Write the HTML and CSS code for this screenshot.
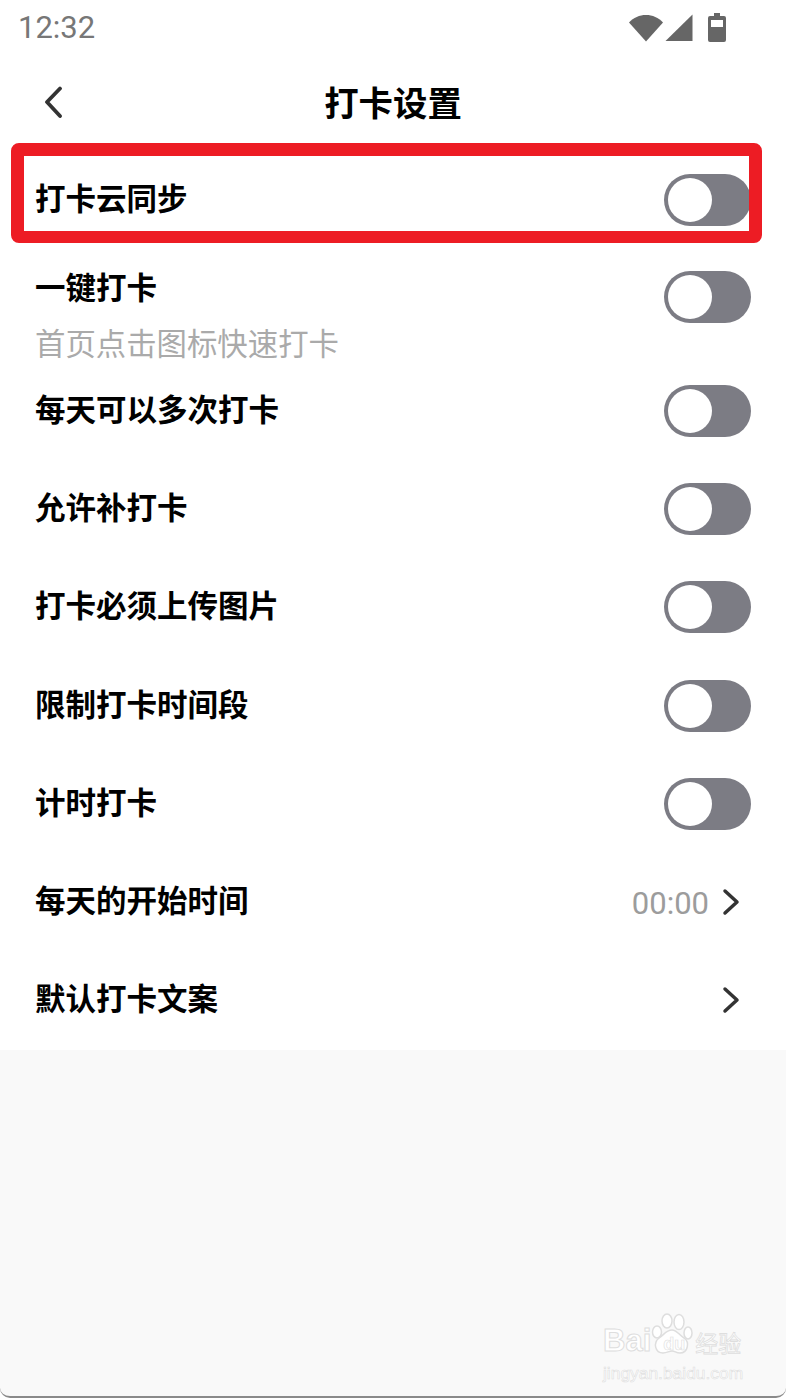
FILE: index.html
```html
<!DOCTYPE html>
<html lang="zh-CN">
<head>
    <meta charset="UTF-8">
    <meta name="viewport" content="width=device-width, initial-scale=1.0">
    <title>打卡设置</title>
    <link rel="stylesheet" href="styles.css">
</head>
<body>
    <div class="status-bar">
        <span class="status-time">12:32</span>
        <div class="status-icons">
            <svg class="icon-wifi" width="34" height="28" viewBox="0 0 34 28"><path d="M0 8.500C4.500 3.500 10.500 1 17 1s12.500 2.500 17 7.500L17 27.500z" fill="#666"/></svg>
            <svg class="icon-signal" width="28" height="28" viewBox="0 0 28 28"><path d="M27.500 .5V27H.5z" fill="#666"/></svg>
            <svg class="icon-battery" width="18" height="29" viewBox="0 0 18 29"><path d="M6 0h6v3h4a2 2 0 0 1 2 2v22a2 2 0 0 1-2 2H2a2 2 0 0 1-2-2V5a2 2 0 0 1 2-2h4z" fill="#666"/><rect x="3" y="7" width="12" height="7" fill="#fff"/></svg>
        </div>
    </div>

    <header class="title-bar">
        <svg class="back-icon" width="24" height="34" viewBox="0 0 24 34"><path d="M19 2.500 6 16l13 14" fill="none" stroke="#333" stroke-width="3.800" stroke-linecap="round" stroke-linejoin="round"/></svg>
        <h1>打卡设置</h1>
    </header>

    <main class="settings">
        <div class="row row-marked">
            <span class="label">打卡云同步</span>
            <span class="switch"></span>
            <div class="mark"></div>
        </div>
        <div class="row row-tall">
            <div>
                <div class="label">一键打卡</div>
                <div class="hint">首页点击图标快速打卡</div>
            </div>
            <span class="switch"></span>
        </div>
        <div class="row"><span class="label">每天可以多次打卡</span><span class="switch"></span></div>
        <div class="row"><span class="label">允许补打卡</span><span class="switch"></span></div>
        <div class="row"><span class="label">打卡必须上传图片</span><span class="switch"></span></div>
        <div class="row"><span class="label">限制打卡时间段</span><span class="switch"></span></div>
        <div class="row"><span class="label">计时打卡</span><span class="switch"></span></div>
        <div class="row">
            <span class="label">每天的开始时间</span>
            <div class="row-value">
                <span class="value">00:00</span>
                <svg class="chevron" width="18" height="28" viewBox="0 0 18 28"><path d="M3 3l12 11L3 25" fill="none" stroke="#333" stroke-width="3.500" stroke-linecap="round" stroke-linejoin="round"/></svg>
            </div>
        </div>
        <div class="row">
            <span class="label">默认打卡文案</span>
            <svg class="chevron" width="18" height="28" viewBox="0 0 18 28"><path d="M3 3l12 11L3 25" fill="none" stroke="#333" stroke-width="3.500" stroke-linecap="round" stroke-linejoin="round"/></svg>
        </div>
    </main>

    <div class="page-rest">
        <div class="watermark">
            <div class="wm-top">
                <span class="wm-brand">Bai</span>
                <div class="wm-paw">
                    <svg width="42" height="42" viewBox="0 0 42 42"><g fill="#fff" stroke="#dedede" stroke-width="1.500"><ellipse cx="6" cy="19" rx="4.500" ry="6"/><ellipse cx="16" cy="8" rx="5" ry="7"/><ellipse cx="28" cy="9" rx="5" ry="7.500"/><ellipse cx="37" cy="20" rx="4" ry="6"/><path d="M21 17c5 0 7 5 12 8 6 4 4 15-4 15-4 0-5-2-8-2s-5 2-9 2C4 40 2 30 8 25c5-3 7-8 13-8z"/></g></svg>
                    <span class="wm-du">du</span>
                </div>
                <span class="wm-cn">经验</span>
            </div>
            <div class="wm-url">jingyan.baidu.com</div>
        </div>
    </div>
</body>
</html>
```

FILE: styles.css
```css
* {
    box-sizing: border-box;
}

html, body {
    margin: 0;
    padding: 0;
}

body {
    display: flex;
    flex-direction: column;
    min-height: 1398px;
    background-color: #ffffff;
    font-family: "Noto Sans CJK SC", "Noto Sans", sans-serif;
    color: #000000;
}

/* Barre d'etat */
.status-bar {
    display: flex;
    justify-content: space-between;
    align-items: center;
    height: 55px;
    padding: 0 60px 0 18px;
}

.status-time {
    font-family: Roboto, sans-serif;
    font-size: 31px;
    color: #777777;
}

.status-icons {
    display: flex;
    align-items: center;
    gap: 2px;
}

.icon-battery {
    margin-left: 13px;
}

/* Titre */
.title-bar {
    position: relative;
    display: flex;
    justify-content: center;
    align-items: center;
    height: 96px;
    padding-bottom: 4px;
}

.title-bar h1 {
    margin: 0;
    font-size: 34.400px;
    font-weight: 700;
}

.back-icon {
    position: absolute;
    left: 41px;
    top: 31px;
}

/* Lignes de reglage */
.settings {
    padding-bottom: 1px;
    background-color: #ffffff;
}

.row {
    position: relative;
    display: flex;
    justify-content: space-between;
    align-items: center;
    height: 98.150px;
    padding: 0 36px 0 35px;
}

.row-tall {
    align-items: flex-start;
    height: 113px;
    padding-top: 22px;
}

.label {
    font-size: 30.500px;
    font-weight: 700;
    line-height: 36px;
    margin-top: -6px;
}

.row-tall .label {
    margin-top: -3px;
}

.hint {
    margin-top: 19px;
    font-size: 30.400px;
    line-height: 38px;
    color: #aaaaaa;
}

.switch {
    position: relative;
    flex: none;
    width: 87px;
    height: 52px;
    margin-right: -1px;
    border-radius: 26px;
    background-color: #7c7c84;
}

.switch::before {
    content: "";
    position: absolute;
    left: 4px;
    top: 4px;
    width: 44px;
    height: 44px;
    border-radius: 50%;
    background-color: #ffffff;
}

.row-value {
    display: flex;
    align-items: center;
    gap: 13px;
}

.value {
    margin-top: 4px;
    font-family: Roboto, sans-serif;
    font-size: 31px;
    color: #9c9c9c;
}

.chevron {
    flex: none;
    margin-right: 10px;
}

/* Cadre rouge par-dessus la premiere ligne */
.mark {
    position: absolute;
    left: 11px;
    top: -8px;
    width: 751px;
    height: 100px;
    border-style: solid;
    border-color: #ed1c24;
    border-width: 13px 13px 12px;
    border-radius: 8px;
}

/* Zone vide du bas */
.page-rest {
    position: relative;
    flex: 1;
    background-color: #f9f9f9;
    border-bottom: 2px solid #8a8a8a;
    border-radius: 0 0 10px 10px;
}

.watermark {
    position: absolute;
    left: 603px;
    top: 263px;
    width: 150px;
}

.wm-top {
    display: flex;
    align-items: flex-end;
    height: 44px;
}

.wm-brand {
    font-family: "Liberation Sans", sans-serif;
    font-size: 31px;
    font-weight: 700;
    line-height: 32px;
    color: #ffffff;
    -webkit-text-stroke: 1px #dedede;
}

.wm-paw {
    position: relative;
    flex: none;
    width: 42px;
    height: 42px;
    margin-bottom: 2px;
}

.wm-du {
    position: absolute;
    left: 12px;
    top: 22px;
    font-family: "Liberation Sans", sans-serif;
    font-size: 18px;
    font-weight: 700;
    line-height: 18px;
    color: #ffffff;
    -webkit-text-stroke: 0.6px #dedede;
}

.wm-cn {
    margin-left: 2px;
    font-size: 23px;
    line-height: 30px;
    color: #ffffff;
    -webkit-text-stroke: 0.8px #dedede;
    white-space: nowrap;
}

.wm-url {
    margin-top: 6px;
    font-family: "Liberation Sans", sans-serif;
    font-size: 17.400px;
    line-height: 20px;
    color: #ffffff;
    -webkit-text-stroke: 0.6px #dedede;
    white-space: nowrap;
}
```
